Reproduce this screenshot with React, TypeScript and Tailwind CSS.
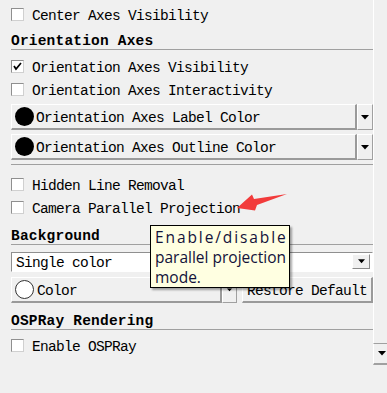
const mono =
  "font-['Liberation_Mono',monospace] text-[14.5px] tracking-[-0.7px] leading-[16px] text-black whitespace-nowrap";
const raised =
  "bg-[#f0f0f0] border-t border-l border-t-white border-l-white border-b-2 border-r-2 border-b-[#9a9a9a] border-r-[#9a9a9a]";

function Checkbox({ checked }: { checked?: boolean }) {
  return (
    <span className="flex h-[13px] w-[13px] shrink-0 items-center justify-center border border-t-[#8f8f8f] border-l-[#8f8f8f] border-r-[#d0d0d0] border-b-[#d0d0d0] bg-white">
      {checked && (
        <svg width="11" height="11" viewBox="0 0 11 11">
          <polyline
            points="2,5 4,8 9,2"
            fill="none"
            stroke="black"
            strokeWidth="1.7"
          />
        </svg>
      )}
    </span>
  );
}

function CheckRow({
  label,
  checked,
  className = "",
}: {
  label: string;
  checked?: boolean;
  className?: string;
}) {
  return (
    <div className={`flex h-[23px] shrink-0 items-center ${className}`}>
      <Checkbox checked={checked} />
      <span className={`${mono} ml-[8px] pt-[3px]`}>{label}</span>
    </div>
  );
}

function Header({ label, className = "" }: { label: string; className?: string }) {
  return (
    <div
      className={`flex shrink-0 items-end border-b border-[#a0a0a0] ${className}`}
    >
      <span className={`${mono} font-bold tracking-[0.2px]`}>{label}</span>
    </div>
  );
}

function Arrow({ size = 7 }: { size?: number }) {
  return (
    <svg width={size} height={Math.ceil(size / 2) + 1} viewBox="0 0 8 5">
      <polygon points="0,0 8,0 4,4.5" fill="black" />
    </svg>
  );
}

function ColorButton({ label }: { label: string }) {
  return (
    <div className="flex h-[26px] shrink-0 mt-[3px]">
      <div className={`${raised} flex flex-1 items-center pl-[3px]`}>
        <span className="h-[19px] w-[19px] rounded-full bg-black" />
        <span className={`${mono} ml-[2px] pt-[2px]`}>{label}</span>
      </div>
      <div className="flex w-[16px] items-center justify-center border-t border-l border-white border-r border-b border-r-[#a0a0a0] border-b-[#a0a0a0] bg-[#f0f0f0]">
        <Arrow size={8} />
      </div>
    </div>
  );
}

function Separator({ className = "" }: { className?: string }) {
  return <div className={`h-px shrink-0 bg-[#a0a0a0] ${className}`} />;
}

export default function App() {
  return (
    <div className="relative flex h-[393px] w-[387px] overflow-hidden bg-[#f0f0f0]">
      <div className="flex w-[373px] shrink-0 flex-col pl-[11px]">
        <CheckRow label="Center Axes Visibility" className="mt-[3px]" />
        <Header label="Orientation Axes" className="h-[24px]" />
        <CheckRow label="Orientation Axes Visibility" checked className="mt-[5px]" />
        <CheckRow label="Orientation Axes Interactivity" />
        <ColorButton label="Orientation Axes Label Color" />
        <div className="mt-px">
          <ColorButton label="Orientation Axes Outline Color" />
        </div>
        <Separator className="mt-[4px]" />
        <CheckRow label="Hidden Line Removal" className="mt-[8px]" />
        <CheckRow label="Camera Parallel Projection" />
        <Header label="Background" className="h-[26px]" />

        <div className="mt-[7px] flex h-[20px] shrink-0 items-start border-t border-l border-t-[#8f8f8f] border-l-[#8f8f8f] border-r border-b border-r-white border-b-white bg-white">
          <span className={`${mono} ml-[4px] flex-1 pt-[2px]`}>Single color</span>
          <div className="mt-px mr-[2px] flex h-[15px] w-[18px] items-center justify-center border-t border-l border-white border-r border-b border-r-[#8a8a8a] border-b-[#8a8a8a] bg-[#f0f0f0]">
            <Arrow />
          </div>
        </div>

        <div className="mt-[5px] flex h-[26px] shrink-0">
          <div className={`${raised} flex w-[211px] items-center pl-[3px]`}>
            <span className="h-[19px] w-[19px] rounded-full border border-[#333] bg-white" />
            <span className={`${mono} ml-[3px] pt-[2px]`}>Color</span>
          </div>
          <div className="flex w-[15px] items-center justify-center border-t border-l border-white border-r border-b border-r-[#a0a0a0] border-b-[#a0a0a0]">
            <Arrow size={5} />
          </div>
          <div className={`${raised} ml-[5px] flex flex-1 items-center pl-[4px]`}>
            <span className={`${mono} pt-[2px]`}>Restore Default</span>
          </div>
        </div>

        <Header label="OSPRay Rendering" className="h-[27px]" />
        <CheckRow label="Enable OSPRay" className="mt-[4px]" />
      </div>

      <div className="flex w-[14px] shrink-0 flex-col">
        <div className="h-[343px] border-l border-white" />
        <div className="flex h-[22px] items-center justify-center border-t border-b-2 border-[#a0a0a0] border-l border-l-white pl-[2px]">
          <Arrow size={8} />
        </div>
      </div>

      <svg
        className="absolute left-[236px] top-[192px]"
        width="54"
        height="22"
        viewBox="0 0 54 22"
      >
        <polygon
          points="1,16 16,2.5 18,7 51,2 21,13 19,18.5"
          fill="#f23b3b"
        />
      </svg>

      <div className="absolute left-[150px] top-[225px] h-[63px] w-[140px] border border-black bg-[#ffffe1] pl-[4px] pt-px shadow-[2px_2px_2px_rgba(0,0,0,0.35)]">
        <div className="font-['Open_Sans',sans-serif] text-[15.5px] leading-[20px] text-[#12123a] whitespace-nowrap">
          <div className="tracking-[1.9px]">Enable/disable</div>
          <div>parallel projection</div>
          <div>mode.</div>
        </div>
      </div>
    </div>
  );
}
